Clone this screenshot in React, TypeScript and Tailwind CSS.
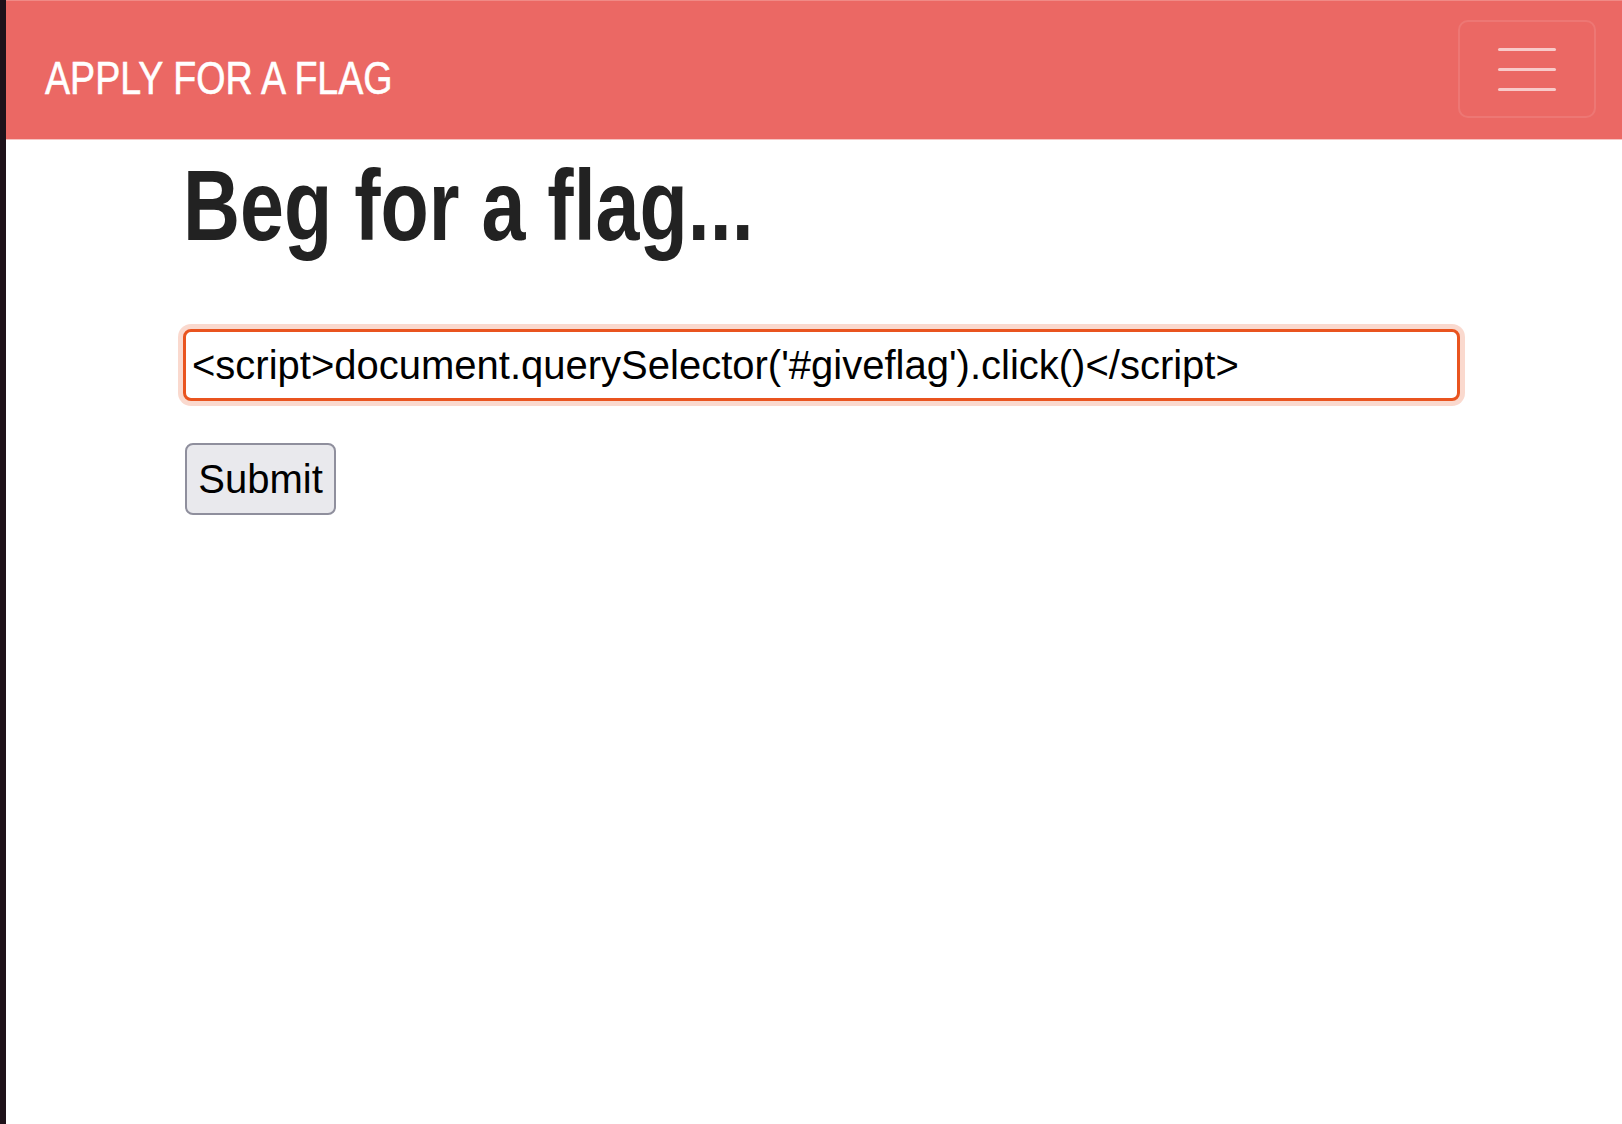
import React from "react";

export default function App() {
  return (
    <div className="flex min-h-[1124px] w-full bg-white">
      <div className="w-[6px] shrink-0 bg-[#1e1119]" />
      <div className="flex min-w-0 flex-1 flex-col">
        <nav className="flex h-[140px] shrink-0 items-center justify-between border-t border-t-[#f08a86] border-b border-b-[#f6c4c2] bg-[#eb6864] pl-[39px] pr-[26px]">
          <span
            className="inline-block origin-left scale-x-[0.8] whitespace-nowrap text-[47px] leading-none text-white mt-[14px] [-webkit-text-stroke:0.6px_white]"
            style={{ fontFamily: '"Liberation Sans", Arial, sans-serif' }}
          >
            APPLY FOR A FLAG
          </span>
          <button className="mb-[2px] flex h-[98px] w-[138px] flex-col items-center justify-center gap-[17px] rounded-[10px] border-[2px] border-white/10">
            <span className="block h-[3px] w-[58px] rounded-full bg-white/65" />
            <span className="block h-[3px] w-[58px] rounded-full bg-white/65" />
            <span className="block h-[3px] w-[58px] rounded-full bg-white/65" />
          </button>
        </nav>
        <main className="flex flex-col pl-[177px] pr-[156px]">
          <h1
            className="mt-[5px] inline-block origin-left scale-x-[0.79] whitespace-nowrap text-[100px] font-bold leading-[1.2] text-[#222222]"
            style={{ fontFamily: '"Liberation Sans", Arial, sans-serif' }}
          >
            Beg for a flag...
          </h1>
          <input
            readOnly
            value="<script>document.querySelector('#giveflag').click()</script>"
            className="mt-[64px] h-[72px] w-[1277px] rounded-[8px] border-[3px] border-[#e9541f] bg-white px-[6px] text-[40px] text-black outline-none shadow-[0_0_0_5px_rgba(233,84,31,0.22)]"
            style={{ fontFamily: '"Liberation Sans", Arial, sans-serif' }}
          />
          <div className="mt-[42px] pl-[2px]">
            <button
              className="h-[72px] w-[151px] rounded-[8px] border-[2px] border-[#8f8f9d] bg-[#e9e9ed] text-[40px] text-black"
              style={{ fontFamily: '"Liberation Sans", Arial, sans-serif' }}
            >
              Submit
            </button>
          </div>
        </main>
      </div>
    </div>
  );
}
